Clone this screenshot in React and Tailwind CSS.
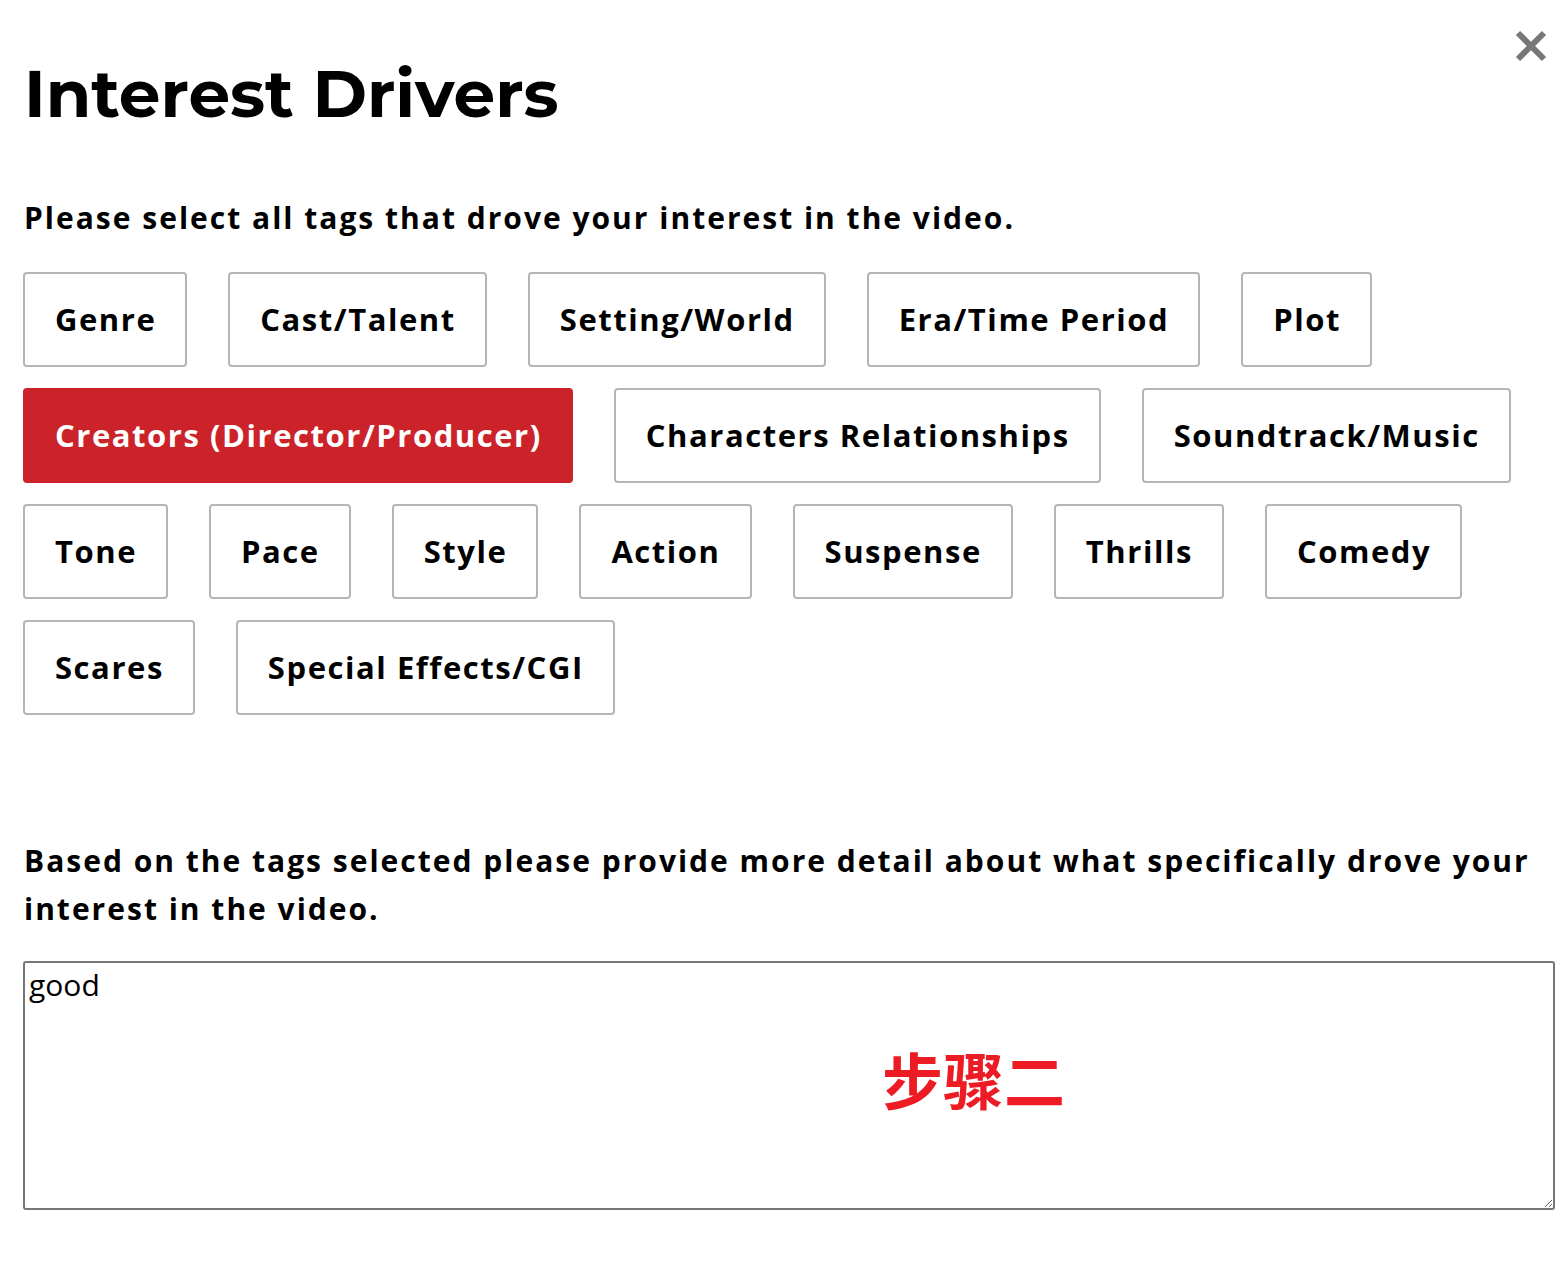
import React, { useState } from 'react';

const TAGS = [
  'Genre',
  'Cast/Talent',
  'Setting/World',
  'Era/Time Period',
  'Plot',
  'Creators (Director/Producer)',
  'Characters Relationships',
  'Soundtrack/Music',
  'Tone',
  'Pace',
  'Style',
  'Action',
  'Suspense',
  'Thrills',
  'Comedy',
  'Scares',
  'Special Effects/CGI',
];

function App() {
  const [selected, setSelected] = useState(['Creators (Director/Producer)']);
  const [detail, setDetail] = useState('good');

  const toggle = (tag) => {
    setSelected((prev) =>
      prev.includes(tag) ? prev.filter((t) => t !== tag) : [...prev, tag]
    );
  };

  return (
    <div className="relative min-h-screen bg-white px-[23px] pt-[61px] pb-10 text-black font-['Open_Sans',sans-serif]">
      {/* 닫기 버튼 */}
      <button className="absolute right-[16px] top-[28px] w-[36px] h-[36px] flex items-center justify-center">
        <svg width="34" height="34" viewBox="0 0 34 34">
          <path d="M4 4 L30 30 M30 4 L4 30" stroke="#777" strokeWidth="6" />
        </svg>
      </button>

      <h1 className="text-[66px] leading-none font-bold ml-[1px] font-['Montserrat',Inter,sans-serif]">
        Interest Drivers
      </h1>

      <p className="mt-[75px] text-[30px] leading-[32px] font-bold tracking-[2px] ml-[1px]">
        Please select all tags that drove your interest in the video.
      </p>

      {/* 태그 목록 */}
      <div className="mt-[38px] flex flex-wrap gap-x-[41px] gap-y-[21px]">
        {TAGS.map((tag) => {
          const on = selected.includes(tag);
          return (
            <button
              key={tag}
              onClick={() => toggle(tag)}
              className={`h-[95px] pl-[30px] pr-[29px] rounded-[4px] border-2 text-[31px] font-bold tracking-[1.55px] ${
                on ? 'bg-[#cc2229] border-[#cc2229] text-white' : 'bg-white border-[#b5b5b5] text-black'
              }`}
            >
              {tag}
            </button>
          );
        })}
      </div>

      <p className="mt-[122px] text-[30px] leading-[48px] font-bold tracking-[2px] ml-[1px]">
        Based on the tags selected please provide more detail about what specifically drove your interest in the video.
      </p>

      <div className="relative mt-[28px]">
        <textarea
          value={detail}
          onChange={(e) => setDetail(e.target.value)}
          className="block w-[1532px] h-[249px] border-2 border-[#767676] rounded-[3px] px-[4px] py-[2px] text-[30px] leading-[40px] outline-none font-['Open_Sans',sans-serif]"
        />
        <span className="absolute left-[859px] top-[87px] text-[61px] leading-none font-bold text-[#ed1c24] pointer-events-none font-['Noto_Sans_CJK_SC',sans-serif]">
          步骤二
        </span>
      </div>
    </div>
  );
}

export default App;
